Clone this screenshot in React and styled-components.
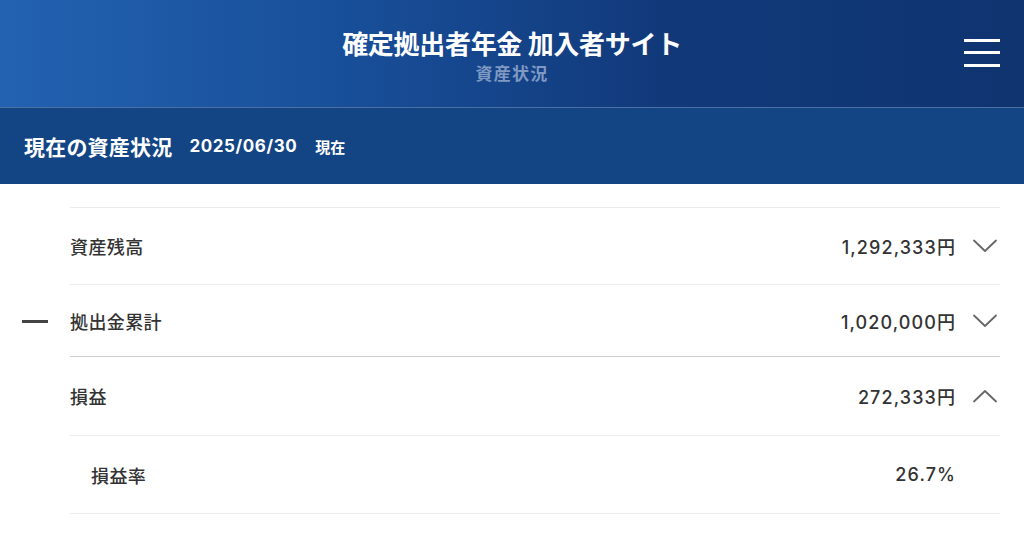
import React from "react";
import styled, { createGlobalStyle } from "styled-components";

const Global = createGlobalStyle`
  html, body { margin: 0; padding: 0; background: #fff; }
  body { font-family: "Noto Sans CJK JP", "Noto Sans", sans-serif; }
  * { box-sizing: border-box; }
`;

const Page = styled.div`
  width: 1024px;
  height: 543px;
  overflow: hidden;
  background: #fff;
`;

const Header = styled.header`
  height: 108px;
  background: linear-gradient(90deg, #2262b1 0%, #184e98 35%, #11397a 65%, #0f3470 100%);
  border-bottom: 1px solid #4c70a4;
  display: grid;
  grid-template-columns: 1fr auto 1fr;
  align-items: center;
  padding: 0 24px;
`;

const TitleBlock = styled.div`
  grid-column: 2;
  display: flex;
  flex-direction: column;
  align-items: center;
  gap: 8px;
  padding-top: 4px;
`;

const Title = styled.h1`
  margin: 0;
  font-size: 26px;
  line-height: 26px;
  font-weight: 700;
  color: #fff;
  letter-spacing: -0.3px;
`;

const SubTitle = styled.div`
  font-size: 17px;
  line-height: 18px;
  font-weight: 700;
  color: #7f99c2;
  letter-spacing: 1.2px;
`;

const MenuButton = styled.button`
  grid-column: 3;
  justify-self: end;
  width: 36px;
  height: 28px;
  margin-top: -2px;
  padding: 0;
  border: 0;
  background: transparent;
  display: flex;
  flex-direction: column;
  justify-content: space-between;
`;

const MenuBar = styled.span`
  display: block;
  width: 36px;
  height: 3px;
  background: #fff;
`;

const SubHeader = styled.div`
  height: 76px;
  background: #134585;
  display: flex;
  align-items: center;
  padding: 0 24px;
  color: #fff;
  font-weight: 700;
`;

const SubTitleMain = styled.span`
  font-size: 21px;
  letter-spacing: 0.2px;
`;

const DateText = styled.span`
  font-family: Inter, "Noto Sans CJK JP", sans-serif;
  font-size: 17px;
  letter-spacing: 0.6px;
  margin-left: 17px;
`;

const AsOf = styled.span`
  font-size: 15px;
  margin-left: 18px;
`;

const List = styled.div`
  margin-top: 23px;
`;

const Row = styled.div`
  display: flex;
  align-items: stretch;
  padding-right: 24px;
`;

const Gutter = styled.div`
  width: 70px;
  display: flex;
  align-items: center;
  padding-left: 22px;
`;

const Dash = styled.span`
  display: block;
  width: 26px;
  height: 3px;
  background: #444;
`;

const RowBody = styled.div`
  flex: 1;
  height: ${(p) => p.$h}px;
  display: flex;
  align-items: center;
  border-top: ${(p) => (p.$first ? "1px solid #ececec" : "none")};
  border-bottom: 1px solid ${(p) => (p.$strong ? "#cfcfcf" : "#ececec")};
  padding-left: ${(p) => (p.$sub ? 21 : 0)}px;
`;

const Label = styled.span`
  flex: 1;
  font-size: 18px;
  font-weight: 500;
  color: #333;
  letter-spacing: 0.4px;
`;

const Value = styled.span`
  font-family: Inter, "Noto Sans CJK JP", sans-serif;
  font-size: 18px;
  font-weight: 500;
  color: #333;
  letter-spacing: 1.1px;
  margin-right: -2px;
`;

const ChevronSlot = styled.span`
  width: 46px;
  display: flex;
  justify-content: flex-end;
  align-items: center;
  padding-right: 2px;
`;

const Chevron = ({ up }) => (
  <svg width="26" height="14" viewBox="0 0 26 14" fill="none">
    <path
      d={up ? "M2 12.5L13 2L24 12.5" : "M2 1.5L13 12L24 1.5"}
      stroke="#666"
      strokeWidth="1.8"
      strokeLinecap="round"
      strokeLinejoin="round"
    />
  </svg>
);

const rows = [
  { label: "資産残高", value: "1,292,333円", chevron: "down", h: 78, first: true },
  { label: "拠出金累計", value: "1,020,000円", chevron: "down", h: 72, dash: true, strong: true },
  { label: "損益", value: "272,333円", chevron: "up", h: 79 },
  { label: "損益率", value: "26.7%", h: 78, sub: true },
];

export default function App() {
  return (
    <Page>
      <Global />
      <Header>
        <TitleBlock>
          <Title>確定拠出者年金 加入者サイト</Title>
          <SubTitle>資産状況</SubTitle>
        </TitleBlock>
        <MenuButton aria-label="menu">
          <MenuBar />
          <MenuBar />
          <MenuBar />
        </MenuButton>
      </Header>
      <SubHeader>
        <SubTitleMain>現在の資産状況</SubTitleMain>
        <DateText>2025/06/30</DateText>
        <AsOf>現在</AsOf>
      </SubHeader>
      <List>
        {rows.map((r) => (
          <Row key={r.label}>
            <Gutter>{r.dash && <Dash />}</Gutter>
            <RowBody $h={r.h} $first={r.first} $strong={r.strong} $sub={r.sub}>
              <Label>{r.label}</Label>
              <Value>{r.value}</Value>
              <ChevronSlot>{r.chevron && <Chevron up={r.chevron === "up"} />}</ChevronSlot>
            </RowBody>
          </Row>
        ))}
      </List>
    </Page>
  );
}
